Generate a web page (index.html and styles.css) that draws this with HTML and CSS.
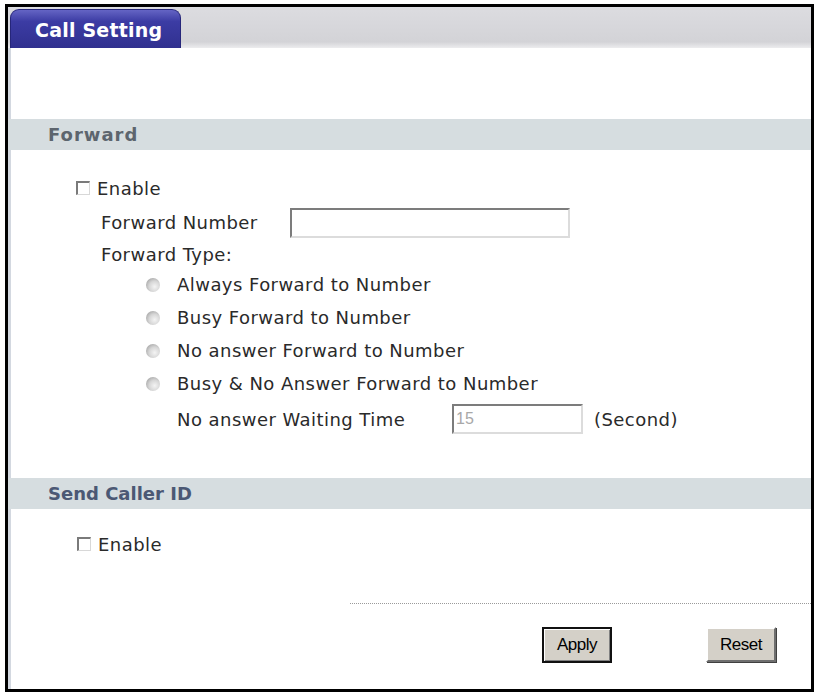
FILE: index.html
```html
<!DOCTYPE html>
<html lang="en">
<head>
  <meta charset="UTF-8">
  <title>Call Setting</title>
  <link rel="stylesheet" href="styles.css">
</head>
<body>

  <div class="frame">
    <div class="tabbar">
      <div class="tab">Call Setting</div>
    </div>

    <div class="section-title title-forward">Forward</div>
    <div class="section">
      <div class="row row-enable">
        <input type="checkbox" class="check">
        <span>Enable</span>
      </div>
      <div class="row row-number">
        <span class="label-number">Forward Number</span>
        <input type="text" class="textbox textbox-number">
      </div>
      <div class="row row-type">Forward Type:</div>
      <div class="row row-radio">
        <input type="radio" name="ftype" class="radio" disabled>
        <span>Always Forward to Number</span>
      </div>
      <div class="row row-radio">
        <input type="radio" name="ftype" class="radio" disabled>
        <span>Busy Forward to Number</span>
      </div>
      <div class="row row-radio">
        <input type="radio" name="ftype" class="radio" disabled>
        <span>No answer Forward to Number</span>
      </div>
      <div class="row row-radio">
        <input type="radio" name="ftype" class="radio" disabled>
        <span>Busy &amp; No Answer Forward to Number</span>
      </div>
      <div class="row row-wait">
        <span class="label-wait">No answer Waiting Time</span>
        <input type="text" class="textbox textbox-wait" value="15" disabled>
        <span>(Second)</span>
      </div>
    </div>

    <div class="section-title title-caller">Send Caller ID</div>
    <div class="section">
      <div class="row row-enable2">
        <input type="checkbox" class="check">
        <span>Enable</span>
      </div>
    </div>

    <div class="divider"></div>

    <div class="buttons">
      <button class="btn btn-default">Apply</button>
      <button class="btn">Reset</button>
    </div>
  </div>

</body>
</html>
```

FILE: styles.css
```css
body {
  margin: 0;
  background: #ffffff;
  font-family: 'DejaVu Sans', Verdana, sans-serif;
  font-size: 18px;
  letter-spacing: 0.45px;
  color: #2a2a2a;
}

.frame {
  box-sizing: border-box;
  height: 688px;
  margin: 4px 1px 0 5px;
  border: 3px solid #000;
  background: #fff;
  box-shadow: inset 3px 0 0 #d3d8e0;
}

/* tab strip */
.tabbar {
  height: 41px;
  padding: 2px 0 0 2px;
  box-sizing: border-box;
  background: linear-gradient(#dcdce0, #d3d3d7 85%, #ececee);
}

.tab {
  width: 171px;
  height: 39px;
  box-sizing: border-box;
  padding: 0 0 0 24px;
  line-height: 41px;
  border-radius: 9px 9px 0 0;
  border: 1px solid #26267a;
  border-bottom: none;
  background: linear-gradient(#6464c4, #3c3ca4 30%, #30308f);
  color: #fff;
  font-weight: bold;
  font-size: 19px;
  letter-spacing: 0.2px;
}

/* section headers */
.section-title {
  height: 31px;
  line-height: 31px;
  padding-left: 40px;
  background: #d6dde0;
  font-weight: bold;
  font-size: 18px;
  letter-spacing: 0.4px;
  color: #5d656e;
}

.title-forward {
  margin-top: 71px;
  letter-spacing: 1px;
}

.title-caller {
  margin-top: 40px;
  color: #4b5874;
  letter-spacing: 0;
}

/* rows */
.row {
  display: flex;
  align-items: center;
}

.row-enable {
  height: 32px;
  margin-top: 22px;
  padding-left: 68px;
}

.row-enable2 {
  height: 32px;
  margin-top: 19px;
  padding-left: 69px;
}

.row-number {
  height: 36px;
  padding-left: 93px;
}

.row-type {
  height: 28px;
  padding-left: 93px;
}

.row-radio {
  height: 33px;
  padding-left: 138px;
}

.row-wait {
  height: 38px;
  padding-left: 169px;
}

.label-number {
  width: 189px;
}

.label-wait {
  width: 275px;
}

/* form controls */
.check {
  appearance: none;
  -webkit-appearance: none;
  display: block;
  flex: none;
  width: 14px;
  height: 14px;
  margin: 0 7px 0 0;
  box-sizing: border-box;
  border-style: solid;
  border-width: 2px 1px 1px 2px;
  border-color: #7a7a7a #d8d8d8 #d8d8d8 #7a7a7a;
  background: #fff;
}

.radio {
  appearance: none;
  -webkit-appearance: none;
  display: block;
  flex: none;
  width: 14px;
  height: 14px;
  margin: 0 17px 0 0;
  border-radius: 50%;
  background: radial-gradient(circle at 62% 62%, #f4f4f4 0, #d6d6d6 45%, #a8a8a8 80%, #8a8a8a 100%);
}

.textbox {
  height: 30px;
  box-sizing: border-box;
  margin: 0;
  border: 2px solid;
  border-color: #7c7c7c #dcdcdc #dcdcdc #7c7c7c;
  background: #fff;
  font-family: 'Liberation Sans', Arial, sans-serif;
  font-size: 16px;
  letter-spacing: 0;
  padding: 0 2px;
}

.textbox-number {
  width: 280px;
  margin-top: 2px;
}

.textbox-wait {
  width: 131px;
  margin-right: 11px;
  color: #a8a8a8;
}

/* footer */
.divider {
  margin: 43px 0 0 342px;
  border-top: 1px dotted #9a9a9a;
}

.buttons {
  display: flex;
  align-items: flex-start;
  padding: 23px 0 0 534px;
  gap: 94px;
}

.btn {
  width: 70px;
  height: 35px;
  padding: 0;
  background: #d4d0c8;
  border: 2px solid;
  border-color: #ffffff #6e6e6e #6e6e6e #ffffff;
  box-shadow: 1px 1px 0 #404040;
  font-family: 'Liberation Sans', Arial, sans-serif;
  font-size: 17px;
  letter-spacing: -0.5px;
  color: #000;
}

.btn-default {
  border: 2px solid #111;
  box-shadow: inset 1px 1px 0 #fff, inset -1px -1px 0 #808080;
  height: 36px;
}
```
